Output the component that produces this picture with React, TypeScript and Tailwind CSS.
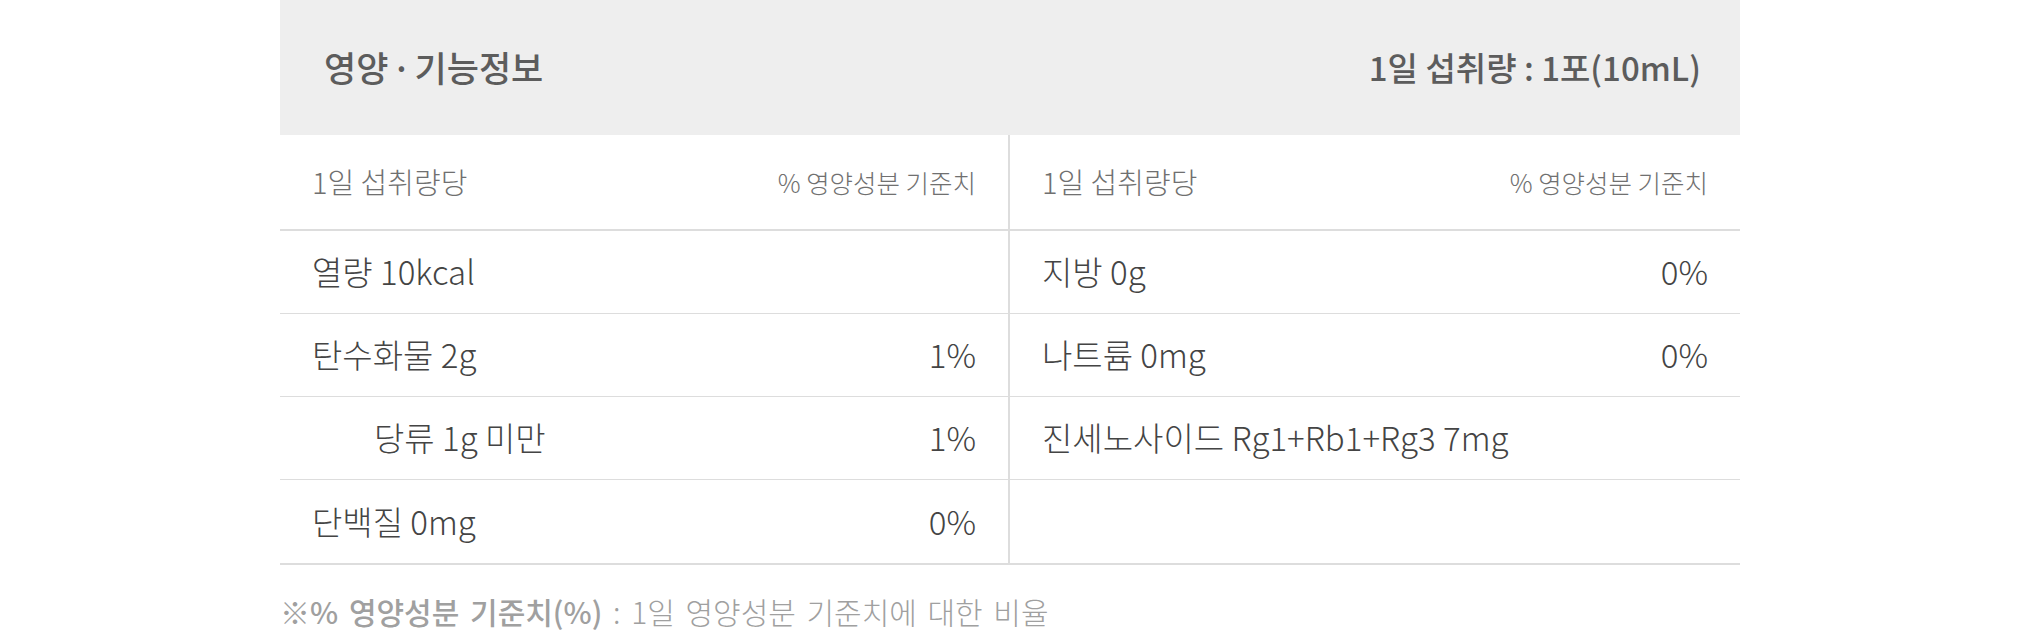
import React from 'react';

interface NutrientRow {
  label: string;
  value?: string;
  indent?: boolean;
}

const leftRows: NutrientRow[] = [
  { label: '열량 10kcal' },
  { label: '탄수화물 2g', value: '1%' },
  { label: '당류 1g 미만', value: '1%', indent: true },
  { label: '단백질 0mg', value: '0%' },
];

const rightRows: NutrientRow[] = [
  { label: '지방 0g', value: '0%' },
  { label: '나트륨 0mg', value: '0%' },
  { label: '진세노사이드 Rg1+Rb1+Rg3 7mg' },
  { label: '' },
];

const Column: React.FC<{ rows: NutrientRow[]; divider?: boolean }> = ({ rows, divider }) => {
  return (
    <div className={divider ? 'border-r-2 border-[#dddddd]' : ''}>
      <div className="h-[96px] flex items-center justify-between px-8 border-b-2 border-[#dddddd]">
        <span className="text-[29px] font-light text-[#707070]">1일 섭취량당</span>
        <span className="text-[25.5px] font-light text-[#707070]">% 영양성분 기준치</span>
      </div>
      {rows.map((row, i) => (
        <div
          key={i}
          className={`h-[83px] flex items-center justify-between px-8 ${i < rows.length - 1 ? 'border-b border-[#dddddd]' : ''}`}
        >
          <span className={`text-[33px] font-light text-[#444444] ${row.indent ? 'pl-[62px]' : ''}`}>{row.label}</span>
          {row.value && <span className="text-[33px] font-light text-[#444444]">{row.value}</span>}
        </div>
      ))}
    </div>
  );
};

export default function App() {
  return (
    <div
      className="w-[2020px] h-[637px] bg-white"
      style={{ fontFamily: '"Noto Sans CJK KR", "Noto Sans", sans-serif' }}
    >
      <div className="w-[1460px] mx-auto">
        <div className="h-[135px] bg-[#eeeeee] flex items-center justify-between pl-[44px] pr-[39px]">
          <h2 className="text-[35px] font-medium text-[#5c5c5c]">
            영양<span className="mx-[3px]">·</span>기능정보
          </h2>
          <span className="text-[33px] font-medium text-[#5c5c5c]">1일 섭취량 : 1포(10mL)</span>
        </div>
        <div className="grid grid-cols-2 border-b-2 border-[#dddddd]">
          <Column rows={leftRows} divider />
          <Column rows={rightRows} />
        </div>
        <p className="mt-[26px] text-[30px] leading-[40px] text-[#a0a0a0] font-light [word-spacing:4px]">
          <span className="font-medium">※% 영양성분 기준치(%)</span> : 1일 영양성분 기준치에 대한 비율
        </p>
      </div>
    </div>
  );
}
